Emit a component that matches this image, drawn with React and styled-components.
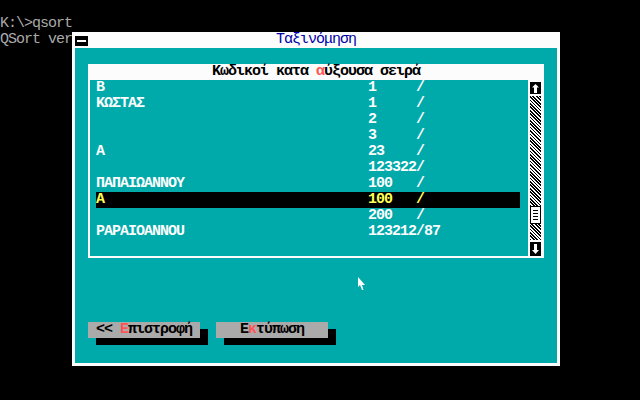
import React from 'react';
import styled, { createGlobalStyle } from 'styled-components';

const mono = `"Liberation Mono", "DejaVu Sans Mono", monospace`;

const GlobalStyle = createGlobalStyle`
  html, body {
    margin: 0;
    padding: 0;
    background: #000;
  }
  body {
    font-family: ${mono};
  }
`;

const Screen = styled.div`
  position: relative;
  width: 640px;
  height: 400px;
  background: #000;
  overflow: hidden;
  font-family: ${mono};
  font-size: 15px;
  letter-spacing: -1px;
`;

const Console = styled.div`
  color: #aaaaaa;
  line-height: 16px;
  white-space: pre;
`;

const Window = styled.div`
  position: absolute;
  left: 72px;
  top: 32px;
  width: 488px;
  height: 334px;
  box-sizing: border-box;
  background: #fcfcfc;
  padding: 0 3px 3px;
  display: flex;
  flex-direction: column;
`;

const TitleBar = styled.div`
  height: 16px;
  display: grid;
  grid-template-columns: 13px 1fr 13px;
  align-items: center;
`;

const CloseBox = styled.div`
  width: 13px;
  height: 10px;
  background: #000;
  display: flex;
  align-items: center;
  justify-content: center;
  margin-top: 1px;

  &::after {
    content: '';
    width: 9px;
    height: 2px;
    background: #fff;
  }
`;

const Title = styled.div`
  text-align: center;
  color: #0000aa;
  line-height: 16px;
`;

const Body = styled.div`
  flex: 1;
  background: #00aaaa;
  padding: 16px 13px 0;
  display: flex;
  flex-direction: column;
`;

const Panel = styled.div`
  display: flex;
  flex-direction: column;
`;

const PanelHeader = styled.div`
  height: 16px;
  line-height: 16px;
  background: #fcfcfc;
  color: #000;
  font-weight: bold;
  text-align: center;
`;

const Red = styled.span`
  color: #ff5555;
`;

const PanelBody = styled.div`
  height: 176px;
  display: flex;
  border-left: 2px solid #fcfcfc;
  border-right: 3px solid #fcfcfc;
  border-bottom: 2px solid #fcfcfc;
`;

const List = styled.div`
  flex: 1;
  padding: 0 8px 0 6px;
`;

const Row = styled.div`
  height: 16px;
  line-height: 16px;
  display: grid;
  grid-template-columns: 272px 48px auto;
  font-weight: bold;
  white-space: pre;
  color: ${(p) => (p.$selected ? '#ffff55' : '#fcfcfc')};
  background: ${(p) => (p.$selected ? '#000' : 'transparent')};
`;

const Divider = styled.div`
  width: 2px;
  background: #fcfcfc;
`;

const Scrollbar = styled.div`
  width: 11px;
  display: flex;
  flex-direction: column;
  background: #fcfcfc;
`;

const ArrowBox = styled.div`
  height: ${(p) => p.$h}px;
  margin-top: ${(p) => p.$mt || 0}px;
  background: #000;
  display: flex;
  align-items: center;
  justify-content: center;
`;

const Track = styled.div`
  flex: 1;
  margin: 2px 0;
  display: flex;
  flex-direction: column;
  background: repeating-linear-gradient(
    45deg,
    #000 0 1.2px,
    #fcfcfc 1.2px 2.4px
  );
`;

const Thumb = styled.div`
  margin-top: 110px;
  height: 18px;
  box-sizing: border-box;
  border: 1px solid #000;
  background: #fcfcfc;
  display: flex;
  flex-direction: column;
  justify-content: space-evenly;
  padding: 1px 2px;

  & > span {
    height: 1px;
    background: #000;
  }
`;

const Buttons = styled.div`
  margin-top: 64px;
  display: flex;
  gap: 16px;
`;

const Button = styled.div`
  width: 112px;
  height: 16px;
  line-height: 16px;
  box-sizing: border-box;
  background: #aaaaaa;
  color: #000;
  font-weight: bold;
  white-space: pre;
  padding-left: ${(p) => (p.$center ? 0 : 8)}px;
  text-align: ${(p) => (p.$center ? 'center' : 'left')};
  box-shadow: 8px 7px 0 #000;
`;

const Cursor = styled.svg`
  position: absolute;
  left: 358px;
  top: 277px;
`;

const rows = [
  ['B', '1', '/'],
  ['ΚΩΣΤΑΣ', '1', '/'],
  ['', '2', '/'],
  ['', '3', '/'],
  ['A', '23', '/'],
  ['', '123322', '/'],
  ['ΠΑΠΑΙΩΑΝΝΟΥ', '100', '/'],
  ['A', '100', '/', true],
  ['', '200', '/'],
  ['PAPAIOANNOU', '123212', '/87'],
];

export default function App() {
  return (
    <Screen>
      <GlobalStyle />
      <Console>
        <div>{' '}</div>
        <div>K:\&gt;qsort</div>
        <div>QSort ver</div>
      </Console>

      <Window>
        <TitleBar>
          <CloseBox />
          <Title>Ταξινόμηση</Title>
          <span />
        </TitleBar>
        <Body>
          <Panel>
            <PanelHeader>
              Κωδικοί κατα <Red>α</Red>ύξουσα σειρά
            </PanelHeader>
            <PanelBody>
              <List>
                {rows.map(([name, num, rest, sel], i) => (
                  <Row key={i} $selected={sel}>
                    <span>{name}</span>
                    <span>{num}</span>
                    <span>{rest}</span>
                  </Row>
                ))}
              </List>
              <Divider />
              <Scrollbar>
                <ArrowBox $h={12} $mt={2}>
                  <svg width="7" height="9" viewBox="0 0 7 9">
                    <path d="M3.5 0 L7 3.5 L5 3.5 L5 9 L2 9 L2 3.5 L0 3.5 Z" fill="#fff" />
                  </svg>
                </ArrowBox>
                <Track>
                  <Thumb>
                    <span />
                    <span />
                    <span />
                    <span />
                  </Thumb>
                </Track>
                <ArrowBox $h={14}>
                  <svg width="7" height="10" viewBox="0 0 7 10">
                    <path d="M3.5 10 L7 6 L5 6 L5 0 L2 0 L2 6 L0 6 Z" fill="#fff" />
                  </svg>
                </ArrowBox>
              </Scrollbar>
            </PanelBody>
          </Panel>
          <Buttons>
            <Button>
              {'<< '}
              <Red>Ε</Red>πιστροφή
            </Button>
            <Button $center>
              Ε<Red>κ</Red>τύπωση
            </Button>
          </Buttons>
        </Body>
      </Window>

      <Cursor width="7" height="13" viewBox="0 0 7 13">
        <path d="M0 0 L0 10 L2 8 L4 13 L5.5 13 L4 8 L7 8 Z" fill="#fff" />
      </Cursor>
    </Screen>
  );
}
